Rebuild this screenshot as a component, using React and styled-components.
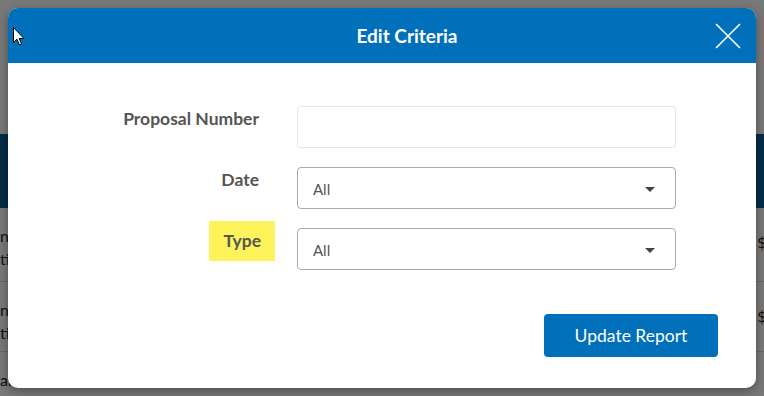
import styled, { createGlobalStyle } from 'styled-components';

const GlobalStyle = createGlobalStyle`
  html, body {
    margin: 0;
    padding: 0;
    width: 764px;
    height: 396px;
    overflow: hidden;
    font-family: Lato, "Open Sans", Arial, sans-serif;
  }
`;

const Page = styled.div`
  position: relative;
  width: 764px;
  height: 396px;
  overflow: hidden;
  background: #fff;
`;

const PageTop = styled.div`
  height: 134px;
`;

const NavBar = styled.div`
  height: 74px;
  background: #0b5f96;
`;

const TableRow = styled.div`
  display: grid;
  grid-template-columns: 757px 200px;
  height: ${(p) => p.$h}px;
  border-bottom: 1px solid #d8d8d8;
  font-size: 16px;
  color: #222;
  line-height: 23px;
  padding-top: 16px;
  box-sizing: border-box;
`;

const Cell = styled.div`
  white-space: nowrap;
`;

const Amount = styled.div`
  white-space: nowrap;
  font-family: "DejaVu Sans", sans-serif;
  padding-top: 7px;
`;

const Backdrop = styled.div`
  position: absolute;
  inset: 0;
  background: rgba(0, 0, 0, 0.53);
`;

const Modal = styled.div`
  position: absolute;
  top: 8px;
  left: 8px;
  width: 748px;
  height: 380px;
  background: #fff;
  border-radius: 10px;
  overflow: hidden;
  box-shadow: 0 3px 10px rgba(0, 0, 0, 0.35);
  display: flex;
  flex-direction: column;
`;

const Header = styled.div`
  height: 55px;
  flex: none;
  background: #0070ba;
  display: flex;
  align-items: center;
  justify-content: center;
  padding-left: 50px;
  position: relative;
`;

const Title = styled.h2`
  margin: 0;
  color: #fff;
  font-size: 19px;
  font-weight: 700;
`;

const CloseButton = styled.button`
  position: absolute;
  right: 14px;
  top: 14px;
  width: 28px;
  height: 28px;
  padding: 0;
  border: none;
  background: transparent;
  display: flex;
  align-items: center;
  justify-content: center;
`;

const Body = styled.div`
  padding: 43px 0 0;
  display: flex;
  flex-direction: column;
  gap: 19px;
`;

const FieldRow = styled.div`
  display: grid;
  grid-template-columns: 251px 379px;
  column-gap: 38px;
  align-items: start;
`;

const Label = styled.div`
  text-align: right;
  font-size: 17.5px;
  font-weight: 700;
  color: #555;
  line-height: 25px;
`;

const Highlight = styled.span`
  display: inline-block;
  background: #fff35c;
  padding: 7px 14px 8px;
  margin: -7px -16px -8px 0;
  line-height: 25px;
`;

const TextInput = styled.div`
  height: 42px;
  box-sizing: border-box;
  border: 1px solid #e6e6e6;
  border-radius: 3px;
`;

const Select = styled.div`
  height: 42px;
  box-sizing: border-box;
  border: 1px solid #aaa;
  border-radius: 4px;
  display: flex;
  align-items: center;
  justify-content: space-between;
  padding: 2px 20px 0 15px;
  font-size: 15px;
  color: #555;
`;

const Caret = styled.span`
  width: 0;
  height: 0;
  border-left: 5px solid transparent;
  border-right: 5px solid transparent;
  border-top: 5px solid #444;
`;

const Footer = styled.div`
  display: flex;
  justify-content: flex-end;
  padding: 44px 38px 0 0;
`;

const PrimaryButton = styled.button`
  width: 174px;
  height: 43px;
  border: none;
  border-radius: 4px;
  background: #0070ba;
  color: #fff;
  font-family: Lato, Arial, sans-serif;
  font-size: 17.5px;
  padding: 0;
`;

const Cursor = styled.svg`
  position: absolute;
  left: 13px;
  top: 27px;
`;

const SelectField = ({ value }) => (
  <Select>
    <span>{value}</span>
    <Caret />
  </Select>
);

export default function App() {
  return (
    <Page>
      <GlobalStyle />
      <PageTop />
      <NavBar />
      <TableRow $h={74}>
        <Cell>nd Ave<br />tion</Cell>
        <Amount>$1,250.00</Amount>
      </TableRow>
      <TableRow $h={70}>
        <Cell>n Road<br />tion</Cell>
        <Amount>$980.00</Amount>
      </TableRow>
      <TableRow $h={70}>
        <Cell>ar</Cell>
        <Amount />
      </TableRow>
      <Backdrop />
      <Modal>
        <Header>
          <Title>Edit Criteria</Title>
          <CloseButton aria-label="Close">
            <svg width="26" height="26" viewBox="0 0 26 26">
              <path d="M1 1L25 25M25 1L1 25" stroke="#fff" strokeWidth="1.6" fill="none" />
            </svg>
          </CloseButton>
        </Header>
        <Body>
          <FieldRow>
            <Label>Proposal Number</Label>
            <TextInput />
          </FieldRow>
          <FieldRow>
            <Label>Date</Label>
            <SelectField value="All" />
          </FieldRow>
          <FieldRow>
            <Label>
              <Highlight>Type</Highlight>
            </Label>
            <SelectField value="All" />
          </FieldRow>
        </Body>
        <Footer>
          <PrimaryButton>Update Report</PrimaryButton>
        </Footer>
      </Modal>
      <Cursor width="12" height="19" viewBox="0 0 12 19">
        <path d="M0.5 0.5V15.5L4 12.2L6.5 18L8.6 17.1L6.2 11.5H11L0.5 0.5Z" fill="#fff" stroke="#000" strokeWidth="1" />
      </Cursor>
    </Page>
  );
}
